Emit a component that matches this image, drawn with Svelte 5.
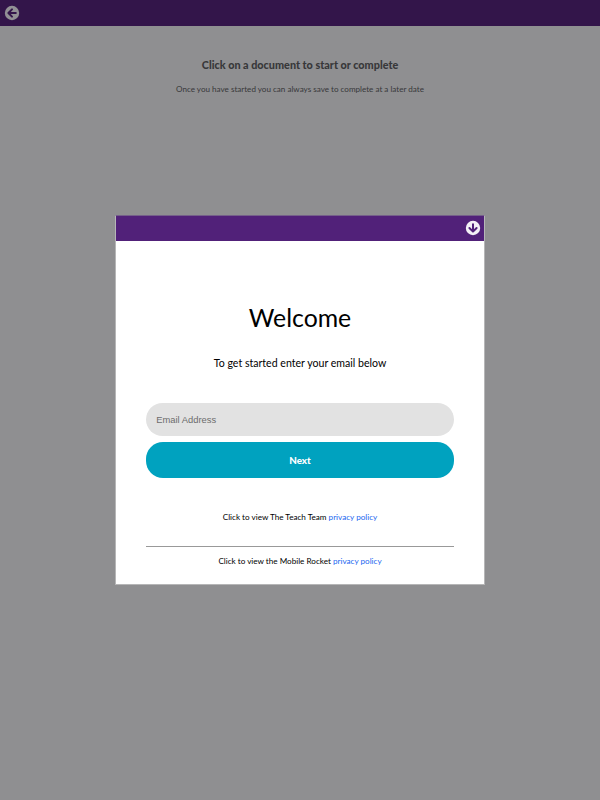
<script lang="ts">
  let email = $state('');

  const policies = [
    { id: 'teach', text: 'Click to view The Teach Team' },
    { id: 'rocket', text: 'Click to view the Mobile Rocket' },
  ];
</script>

{#snippet arrowIcon(down: boolean)}
  <svg class="icon" class:down viewBox="0 0 16 16" aria-hidden="true">
    <circle cx="8" cy="8" r="7.2" fill="currentColor"></circle>
    <path
      d="M11.8 8H4.6M8 4.4L4.4 8l3.6 3.6"
      fill="none"
      stroke="var(--bar)"
      stroke-width="2"
      stroke-linecap="round"
      stroke-linejoin="round"
    ></path>
  </svg>
{/snippet}

<div class="page">
  <header class="topbar">
    <button class="icon-button" aria-label="Back">{@render arrowIcon(false)}</button>
  </header>

  <div class="intro">
    <h1>Click on a document to start or complete</h1>
    <p>Once you have started you can always save to complete at a later date</p>
  </div>

  <div class="overlay">
    <div class="dialog" role="dialog" aria-labelledby="welcome">
      <div class="dialog-bar">
        <button class="icon-button" aria-label="Close">{@render arrowIcon(true)}</button>
      </div>
      <div class="dialog-body">
        <h2 id="welcome">Welcome</h2>
        <p class="lead">To get started enter your email below</p>
        <input type="email" placeholder="Email Address" aria-label="Email Address" bind:value={email} />
        <button class="next">Next</button>
        {#each policies as policy (policy.id)}
          <p class="policy {policy.id}">{policy.text} <a href="#{policy.id}">privacy policy</a></p>
        {/each}
      </div>
    </div>
  </div>
</div>

<style>
  :global(body) {
    margin: 0;
  }

  .page {
    --bar: #33154a;
    position: relative;
    height: 800px;
    overflow: hidden;
    background: #8f8f91;
    font-family: Lato, sans-serif;
  }

  .topbar {
    display: flex;
    align-items: center;
    box-sizing: border-box;
    height: 25.5px;
    padding-left: 3.5px;
    background: var(--bar);
    color: #929095;
  }

  .icon-button {
    display: flex;
    padding: 0;
    border: none;
    background: none;
    color: inherit;
    cursor: pointer;
  }

  .icon {
    width: 16px;
    height: 16px;
  }

  .icon.down {
    transform: rotate(-90deg);
  }

  .intro {
    padding-top: 32px;
    text-align: center;
    color: #38383a;
  }

  h1 {
    margin: 0;
    font-size: 10.82px;
    font-weight: 900;
    line-height: 14px;
  }

  .intro p {
    margin: 10px 0 0;
    font-size: 8.08px;
    line-height: 14px;
  }

  .overlay {
    position: absolute;
    inset: 0;
    display: flex;
    align-items: center;
    justify-content: center;
  }

  .dialog {
    --bar: #512179;
    box-sizing: border-box;
    width: 370px;
    height: 370px;
    border: 1px solid rgb(255 255 255 / 35%);
    border-top-color: #75608a;
    background: #fff;
    background-clip: padding-box;
  }

  .dialog-bar {
    display: flex;
    align-items: center;
    justify-content: flex-end;
    box-sizing: border-box;
    height: 25px;
    padding: 0 3px 1px 0;
    background: var(--bar);
    color: #f3f0f6;
  }

  .dialog-body {
    display: flex;
    flex-direction: column;
    padding: 61px 29.7px 0;
    text-align: center;
    color: #000;
  }

  h2 {
    margin: 0;
    font-size: 24.8px;
    font-weight: 400;
    line-height: 32px;
  }

  .lead {
    margin: 21px 0 0;
    font-size: 10.58px;
    line-height: 16px;
  }

  input {
    box-sizing: border-box;
    height: 33px;
    margin-top: 32px;
    padding: 0 10.5px;
    border: none;
    border-radius: 17px;
    background: #e2e2e2;
    font-family: 'Liberation Sans', sans-serif;
    font-size: 9.4px;
  }

  input::placeholder {
    color: #6c6c6c;
    opacity: 1;
  }

  .next {
    height: 36px;
    margin-top: 6px;
    padding: 0 0 1px;
    border: none;
    border-radius: 17px;
    background: #00a2bf;
    color: #fff;
    font-family: inherit;
    font-size: 9.8px;
    font-weight: 900;
    cursor: pointer;
  }

  .policy {
    margin: 0;
    padding-top: 32px;
    font-size: 8.14px;
    line-height: 15px;
  }

  .policy.rocket {
    margin-top: 21px;
    padding-top: 7px;
    border-top: 1px solid #999;
  }

  a {
    color: #1a66f0;
    text-decoration: none;
  }
</style>
